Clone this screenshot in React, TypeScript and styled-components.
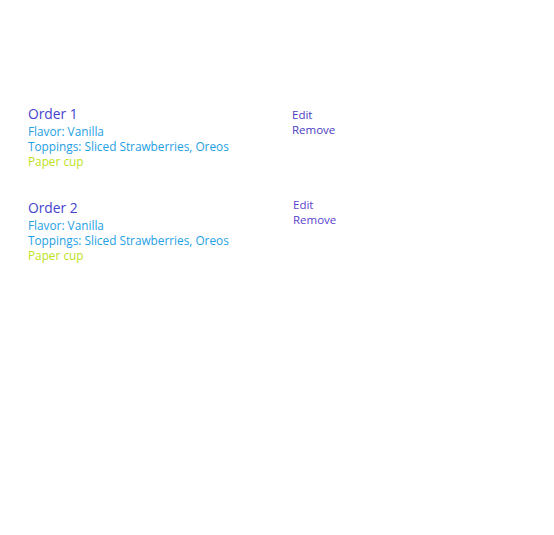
import React from "react";
import styled, { createGlobalStyle } from "styled-components";

const Global = createGlobalStyle`
  html, body { margin: 0; padding: 0; background: #ffffff; }
  body { font-family: "Open Sans", "Noto Sans", sans-serif; }
`;

const Page = styled.div`
  padding: 104px 0 0 28px;
  display: flex;
  flex-direction: column;
  gap: 29px;
`;

const OrderRow = styled.div`
  display: grid;
  grid-template-columns: 264px auto;
  align-items: start;
`;

const Details = styled.div`
  display: flex;
  flex-direction: column;
`;

const Title = styled.div`
  font-size: 13.8px;
  line-height: 19px;
  color: #4343cc;
  margin-bottom: 1px;
`;

const Line = styled.div<{ $tone: "info" | "cup" }>`
  font-size: 11.8px;
  line-height: 15px;
  color: ${(p) => (p.$tone === "cup" ? "#bde21c" : "#1ea0e4")};
`;

const Actions = styled.div<{ $offset: number; $shift: number }>`
  display: flex;
  flex-direction: column;
  padding-top: ${(p) => p.$offset}px;
  padding-left: ${(p) => p.$shift}px;
`;

const Action = styled.div<{ $violet?: boolean }>`
  font-size: 11.5px;
  line-height: 14.5px;
  color: ${(p) => (p.$violet ? "#5a3fd0" : "#4a3cc0")};
  cursor: pointer;
`;

const orders = [
  { id: 1, flavor: "Vanilla", toppings: "Sliced Strawberries, Oreos", cup: "Paper cup" },
  { id: 2, flavor: "Vanilla", toppings: "Sliced Strawberries, Oreos", cup: "Paper cup" },
];

export default function App() {
  return (
    <>
      <Global />
      <Page>
        {orders.map((o, i) => (
          <OrderRow key={o.id}>
            <Details>
              <Title>Order {o.id}</Title>
              <Line $tone="info">Flavor: {o.flavor}</Line>
              <Line $tone="info">Toppings: {o.toppings}</Line>
              <Line $tone="cup">{o.cup}</Line>
            </Details>
            <Actions $offset={i === 0 ? 4 : 0} $shift={i === 0 ? 0 : 1}>
              <Action $violet={i === 1}>Edit</Action>
              <Action $violet={i === 1}>Remove</Action>
            </Actions>
          </OrderRow>
        ))}
      </Page>
    </>
  );
}
